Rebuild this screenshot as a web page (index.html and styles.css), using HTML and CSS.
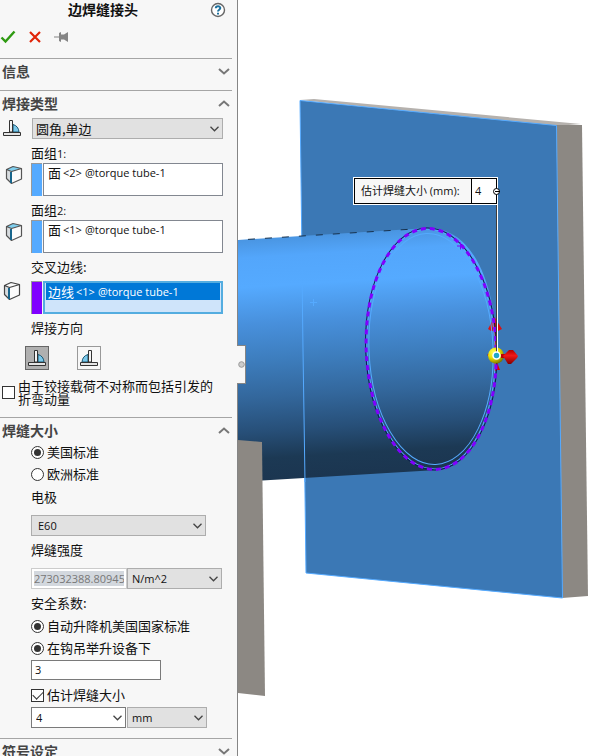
FILE: index.html
```html
<!DOCTYPE html>
<html lang="zh-CN">
<head>
<meta charset="utf-8">
<meta name="viewport" content="width=device-width, initial-scale=1">
<title>边焊缝接头</title>
<link rel="stylesheet" href="styles.css">
</head>
<body>
<svg class="symbols" aria-hidden="true">
  <symbol id="chevron" viewBox="0 0 12 7"><path d="M1 1l5 4.500L11 1" fill="none" stroke="currentColor" stroke-width="2"/></symbol>
  <symbol id="arrow" viewBox="0 0 9 6"><path d="M.5 .8l4 4 4-4" fill="none" stroke="currentColor" stroke-width="1.300"/></symbol>
  <symbol id="weld" viewBox="0 0 20 18">
    <path d="M11 5.500Q16.500 7 17 13h-6z" fill="#7cc8ea" stroke="#17546f"/>
    <path d="M7.500 1.500h3V13h-3z" fill="#f4f4f4" stroke="#333"/>
    <path d="M1.500 13.500h17v3h-17z" fill="#e4e4e4" stroke="#333"/>
  </symbol>
  <symbol id="face" viewBox="0 0 18 20">
    <path d="M1.500 4.500L8 1.500l8.500 2v10.500L6.500 18.500l-5-5z" fill="#fbfbfb"/>
    <path d="M1.500 4.500L8 1.500l8.500 2-10 3z" fill="#7fd0f0"/>
    <path d="M1.500 4.500l5 2v12l-5-5z" fill="#d8dcdf"/>
    <path d="M1.500 4.500L8 1.500l8.500 2v10.500L6.500 18.500l-5-5zM1.500 4.500l5 2 10-3" fill="none" stroke="#555" stroke-width="1.200" stroke-linejoin="round"/>
    <path d="M6 7v11" stroke="#17658c" stroke-width="2"/>
  </symbol>
  <symbol id="edge" viewBox="0 0 18 20">
    <path d="M1.500 4.500L8 1.500l8.500 2v10.500L6.500 18.500l-5-5z" fill="#fbfbfb"/>
    <path d="M1.500 4.500l5 2v12l-5-5z" fill="#d8dcdf"/>
    <path d="M1.500 4.500L8 1.500l8.500 2v10.500L6.500 18.500l-5-5zM1.500 4.500l5 2 10-3" fill="none" stroke="#444" stroke-width="1.200" stroke-linejoin="round"/>
    <path d="M6 7v11" stroke="#17658c" stroke-width="2"/>
  </symbol>
</svg>

<div class="app">
  <aside class="panel">
    <header class="titlebar">
      <h1>边焊缝接头</h1>
      <button class="plain" aria-label="帮助">
        <svg width="16" height="16" viewBox="0 0 16 16"><circle cx="8" cy="8" r="6.500" fill="#fff" stroke="#666" stroke-width="1.400"/><path d="M5.800 6.300C5.800 3.600 10.300 3.600 10.300 6.100 10.300 7.800 8 7.700 8 9.500M8 10.700v1.800" fill="none" stroke="#1b6f9c" stroke-width="2"/></svg>
      </button>
    </header>
    <div class="actions">
      <button class="plain" aria-label="确定"><svg width="16" height="14" viewBox="0 0 16 14"><path d="M1.500 7.500l4 4L14.500 1.500" fill="none" stroke="#2f9a12" stroke-width="2.400"/></svg></button>
      <button class="plain" aria-label="取消"><svg width="12" height="12" viewBox="0 0 12 12"><path d="M1 1l10 10M11 1L1 11" stroke="#e02408" stroke-width="2.200"/></svg></button>
      <button class="plain" aria-label="保持可见"><svg width="16" height="12" viewBox="0 0 16 12"><path d="M0 5.500h5V2l2-1v2.500h3L14 1v10l-4-2.500H7V11L5 10V6.500H0z" fill="#858585"/></svg></button>
    </div>

    <section class="group">
      <h2><button>信息<svg class="caret"><use href="#chevron"/></svg></button></h2>
    </section>

    <section class="group type">
      <h2><button>焊接类型<svg class="caret up"><use href="#chevron"/></svg></button></h2>
      <div class="line">
        <svg class="icon"><use href="#weld"/></svg>
        <span class="drop wide"><select class="cjk" aria-label="焊接类型"><option>圆角,单边</option></select><svg class="arrow"><use href="#arrow"/></svg></span>
      </div>
      <h3 id="set1">面组<span class="latin">1:</span></h3>
      <div class="line">
        <svg class="icon cube"><use href="#face"/></svg>
        <div class="picker"><i class="swatch"></i><ul role="listbox" aria-labelledby="set1"><li role="option">面<span class="latin index">&lt;2&gt;</span><span class="latin">@torque tube-1</span></li></ul></div>
      </div>
      <h3 id="set2">面组<span class="latin">2:</span></h3>
      <div class="line">
        <svg class="icon cube"><use href="#face"/></svg>
        <div class="picker"><i class="swatch"></i><ul role="listbox" aria-labelledby="set2"><li role="option">面<span class="latin index">&lt;1&gt;</span><span class="latin">@torque tube-1</span></li></ul></div>
      </div>
      <h3 id="edges">交叉边线:</h3>
      <div class="line edges">
        <svg class="icon cube"><use href="#edge"/></svg>
        <div class="picker"><i class="swatch violet"></i><ul class="active" role="listbox" aria-labelledby="edges"><li role="option" aria-selected="true">边线<span class="latin index">&lt;1&gt;</span><span class="latin">@torque tube-1</span></li></ul></div>
      </div>
      <h3>焊接方向</h3>
      <div class="directions">
        <button class="pressed" aria-pressed="true" aria-label="正向"><svg class="icon"><use href="#weld"/></svg></button>
        <button aria-pressed="false" aria-label="反向"><svg class="icon flip"><use href="#weld"/></svg></button>
      </div>
      <label class="moment"><input type="checkbox"><span>由于铰接载荷不对称而包括引发的折弯动量</span></label>
    </section>

    <section class="group size">
      <h2><button>焊缝大小<svg class="caret up"><use href="#chevron"/></svg></button></h2>
      <div class="fields">
        <div class="choices">
          <label><input type="radio" name="standard" checked>美国标准</label>
          <label><input type="radio" name="standard">欧洲标准</label>
        </div>
        <label class="caption" for="electrode">电极</label>
        <span class="drop medium spaced"><select id="electrode"><option>E60</option></select><svg class="arrow"><use href="#arrow"/></svg></span>
        <label class="caption" for="strength">焊缝强度</label>
        <div class="pair spaced">
          <input id="strength" class="locked" type="text" value="273032388.80945" readonly>
          <span class="drop unit"><select aria-label="强度单位"><option>N/m^2</option></select><svg class="arrow"><use href="#arrow"/></svg></span>
        </div>
        <div class="caption">安全系数:</div>
        <div class="choices safety">
          <label><input type="radio" name="factor-source" checked>自动升降机美国国家标准</label>
          <label><input type="radio" name="factor-device" checked>在钩吊举升设备下</label>
        </div>
        <input class="factor" type="text" value="3" aria-label="安全系数">
        <label class="estimate"><input type="checkbox" checked>估计焊缝大小</label>
        <div class="pair weld-size">
          <span class="drop editable"><select aria-label="焊缝大小"><option>4</option></select><svg class="arrow"><use href="#arrow"/></svg></span>
          <span class="drop short"><select aria-label="尺寸单位"><option>mm</option></select><svg class="arrow"><use href="#arrow"/></svg></span>
        </div>
      </div>
    </section>

    <section class="group">
      <h2><button>符号设定<svg class="caret"><use href="#chevron"/></svg></button></h2>
    </section>
  </aside>

  <main class="view">
    <svg class="model" viewBox="238 0 352 756" preserveAspectRatio="xMinYMin slice" role="img" aria-label="扭力管模型">
      <defs>
        <linearGradient id="tube" gradientUnits="userSpaceOnUse" x1="330" y1="233" x2="345" y2="478">
          <stop offset="0" stop-color="#4994e0"/><stop offset=".08" stop-color="#53a6fb"/><stop offset=".2" stop-color="#55aaff"/>
          <stop offset=".35" stop-color="#4890dc"/><stop offset=".5" stop-color="#3d7dbd"/><stop offset=".65" stop-color="#33679c"/>
          <stop offset=".79" stop-color="#274f78"/><stop offset=".9" stop-color="#1c3954"/><stop offset="1" stop-color="#1b3550"/>
        </linearGradient>
        <radialGradient id="ball" cx=".35" cy=".3" r=".75"><stop offset="0" stop-color="#ffff5c"/><stop offset=".5" stop-color="#e9df00"/><stop offset="1" stop-color="#777000"/></radialGradient>
        <linearGradient id="cone" x1="0" y1="0" x2="0" y2="1"><stop offset="0" stop-color="#b00000"/><stop offset=".4" stop-color="#f01818"/><stop offset="1" stop-color="#820000"/></linearGradient>
      </defs>
      <path d="M300 100l14-1 267 25-25 2z" fill="#b5b1ad"/>
      <path d="M556 125h26l6 471-26 2z" fill="#8c8883"/>
      <path d="M300 100.500l256.500 25 6 472.500L306 573z" fill="#3b78b5" stroke="#55aaff"/>
      <path d="M238 240L428 228C480 228 497 300 497 355S470 470 437 470L238 482z" fill="url(#tube)"/>
      <path d="M238 240l176-11" stroke="#16314d" stroke-dasharray="7 10" stroke-dashoffset="-10"/>
      <path d="M302 270L303 350 305 482" fill="none" stroke="#55aaff"/>
      <path d="M310 302.500h7M313.500 299v7" stroke="#55aaff"/>
      <path d="M238 440l24 2 3 254-27-3z" fill="#8c8883"/>
      <path d="M494.500 317l7.500 12-4 2h-7l-3-2z" fill="#dd1111"/>
      <path d="M494 330h3v41h-3z" fill="#cc1111"/><path d="M495 370l2-8 3 8z" fill="#d00"/>
      <g transform="rotate(-2.300 431 349)" fill="none">
        <ellipse cx="431" cy="349" rx="62" ry="115.500" stroke="#55aaff"/>
        <ellipse cx="431" cy="349" rx="64" ry="120" stroke="#55aaff"/>
        <ellipse cx="431.200" cy="349" rx="65.500" ry="121" stroke="#0b1c50"/>
        <ellipse cx="431.200" cy="349" rx="65" ry="120.500" stroke="#8000ff" stroke-width="3" stroke-dasharray="5 4"/>
      </g>
      <path d="M457 246h7M460.500 242.500v7" stroke="#8000ff"/>
      <path d="M487 355l6-4v8z" fill="#d00"/>
      <circle cx="496" cy="355.500" r="8" fill="url(#ball)"/>
      <path d="M501 354h4v4h-4z" fill="#b00"/>
      <path d="M503 356l6-6 4 0 5 6-1 2-6 6h-3z" fill="url(#cone)"/>
      <path d="M496.500 203v149" stroke="#403c38"/><path d="M497.500 203v149" stroke="#fff"/>
      <circle cx="496.500" cy="355.500" r="3.500" fill="#20a8c8" stroke="#fff" stroke-width="1.500"/>
    </svg>
    <label class="callout"><span class="callout-name">估计焊缝大小 (mm):</span><input type="text" value="4"><svg class="anchor" viewBox="0 0 7 7"><circle cx="3.500" cy="3.500" r="3" fill="#fff" stroke="#000"/><path d="M2 3.500h5" stroke="#000"/></svg></label>
    <button class="splitter" aria-label="折叠面板"><svg width="7" height="7" viewBox="0 0 7 7"><circle cx="3.500" cy="3.500" r="2.800" fill="#ccc" stroke="#999"/></svg></button>
  </main>
</div>
</body>
</html>
```
FILE: styles.css
```css
* { box-sizing: border-box; }

body {
  margin: 0;
  background: #fff;
  color: #111;
  font: 13px/20px "Noto Sans CJK SC", sans-serif;
}

h1, h2, h3, ul { margin: 0; padding: 0; }
button, input, select { font: inherit; color: inherit; margin: 0; }
svg { display: block; flex: none; }
.symbols { position: absolute; width: 0; height: 0; }

.app {
  display: grid;
  grid-template-columns: 238px 1fr;
  height: 100vh;
  overflow: hidden;
}

.panel {
  background: #f7f7f7;
  border-right: 1px solid #858585;
  overflow: hidden;
}

.latin, select, input { font-family: "Open Sans", "Noto Sans CJK SC", sans-serif; font-size: 11px; }
h3 .latin { line-height: 1; }

/* Title and command row */
.titlebar { display: flex; align-items: center; gap: 4px; height: 20px; padding-right: 11px; }
.titlebar h1 { flex: 1; padding-bottom: 2px; font-size: 14px; line-height: 18px; font-weight: 700; text-align: center; }
.plain { padding: 0; border: 0; background: none; }
.actions { display: flex; align-items: center; gap: 13px; height: 38px; padding-bottom: 4px; }

/* Collapsible groups */
.group { margin-right: 5px; padding-bottom: 4px; border-top: 1px solid #a5a5a5; }
.group h2 { font-size: 14px; line-height: 27px; }
.group h2 button {
  display: flex;
  align-items: center;
  justify-content: space-between;
  width: 100%;
  height: 27px;
  padding: 0 2px 2px;
  border: 0;
  background: none;
  color: #444;
  font-weight: 700;
}
.caret { width: 12px; height: 7px; color: #777; }
.up { transform: rotate(180deg); }
.group h3 { margin: 4px 0 0 31px; font-size: 13px; line-height: 20px; font-weight: 400; }
.type { padding-bottom: 12px; }
.size { padding-bottom: 10px; }

.line { display: grid; grid-template-columns: 31px 1fr; padding-right: 9px; }
.icon { width: 20px; height: 18px; margin: 1px 0 0 2px; }
.cube { width: 18px; height: 20px; margin: 2px 0 0 5px; }
.edges { margin-top: 4px; }
.edges .cube { margin: 0 0 0 3px; }

/* Drop-downs */
.drop { display: flex; align-items: center; position: relative; height: 21px; }
.drop select {
  appearance: none;
  width: 100%;
  height: 21px;
  padding: 0 20px 0 4px;
  border: 1px solid #adadad;
  border-radius: 0;
  background: #e1e1e1;
}
.drop .cjk { padding-left: 3px; font-family: "Noto Sans CJK SC", sans-serif; font-size: 13px; }
.arrow { position: absolute; right: 4px; width: 9px; height: 6px; color: #444; pointer-events: none; }
.wide { margin-left: 1px; }
.medium { width: 175px; }
.medium select { padding-left: 6px; }
.unit { width: 95px; }
.editable { width: 95px; }
.editable select { background: #fff; border-color: #7a7a7a; }
.short { width: 80px; }

/* Selection boxes */
.picker { display: grid; grid-template-columns: 11px 1fr; gap: 1px; height: 33px; }
.swatch { border: 1px solid #999; border-width: 1px 0 0 1px; background: #55aaff; }
.violet { background: #8000ff; }
.picker ul { list-style: none; border: 1px solid #828790; background: #fff; }
.picker li { display: flex; padding-left: 4px; line-height: 18px; }
.index { margin: 0 3px 0 2px; }
.picker .active { padding: 0 1px 1px; border: 2px solid #54ade0; background: #cfe4fa; }
.active li { padding-left: 2px; background: #0078d7; color: #fff; line-height: 17px; }

.directions { display: flex; gap: 28px; margin: 8px 0 0 25px; }
.directions button {
  width: 24px;
  height: 24px;
  padding: 0;
  border: 1px solid #999;
  background: #f7f7f7;
}
.directions .pressed { background: #b0b0b0; border-color: #666; }
.directions .icon { margin: 1px; }
.flip { transform: scaleX(-1); }

/* Tick boxes and radios */
input[type="checkbox"], input[type="radio"] {
  appearance: none;
  display: grid;
  place-items: center;
  flex: none;
  width: 13px;
  height: 13px;
  border: 1px solid #333;
  background: #fff;
}
input[type="radio"] { border-radius: 50%; }
input[type="radio"]:checked::after { content: ""; width: 7px; height: 7px; border-radius: 50%; background: #333; }
input[type="checkbox"]:checked::after {
  content: "";
  width: 9px;
  height: 5px;
  margin-bottom: 2px;
  border: solid #333;
  border-width: 0 0 1px 1px;
  transform: rotate(-45deg);
}
.moment { display: flex; align-items: center; gap: 3px; margin: 9px 12px 0 2px; line-height: 13px; }

.fields { padding: 0 10px 0 31px; }
.choices { display: grid; gap: 8px; }
.choices label, .estimate { display: flex; align-items: center; gap: 3px; height: 14px; }
.caption { display: block; margin-top: 4px; line-height: 20px; }
.choices + .caption { margin-top: 6px; }
.safety { margin-top: 6px; }
.spaced { margin-top: 8px; }
.pair { display: flex; }

input[type="text"] { min-width: 0; border: 1px solid #7a7a7a; border-radius: 0; padding: 0 3px; background: #fff; }
.fields .locked { width: 96px; height: 21px; padding: 0; border: 3px solid #fff; outline: 1px solid #ccc; outline-offset: -1px; background: #d3d8de; color: #777; }
.fields .factor { display: block; width: 130px; height: 20px; margin-top: 5px; }
.estimate { margin-top: 8px; }
.weld-size { gap: 1px; margin-top: 5px; }

/* Model view and what floats over it */
.view { position: relative; min-width: 0; }
.model { width: 100%; height: 100%; }
.callout {
  position: absolute;
  left: 116px;
  top: 178px;
  display: flex;
  width: 143px;
  height: 26px;
  border: 1px solid #000;
  outline: 1px solid #fff;
  background: #f7f7f7;
  font-size: 11px;
  line-height: 24px;
}
.callout-name { flex: 1; padding-left: 6px; font-family: "Open Sans", "Noto Sans CJK SC", sans-serif; white-space: nowrap; }
.callout input { width: 25px; border-width: 0 0 0 1px; border-color: #000; }
.anchor { position: absolute; right: -4px; top: 9px; width: 7px; height: 7px; }
.splitter {
  position: absolute;
  left: -1px;
  top: 345px;
  display: grid;
  place-items: center;
  width: 9px;
  height: 39px;
  padding: 0;
  border: 1px solid #858585;
  border-left: 0;
  background: #f7f7f7;
}
```
